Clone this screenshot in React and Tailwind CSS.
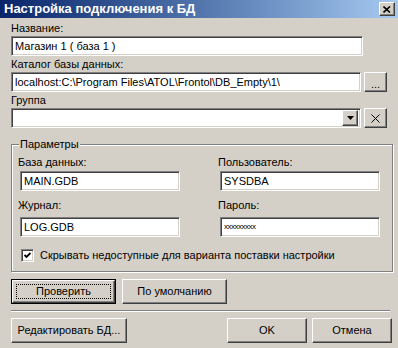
import { useState } from 'react';

const sunken =
  'bg-white border border-t-[#808080] border-l-[#808080] border-b-white border-r-white shadow-[inset_1px_1px_0_#404040,inset_-1px_-1px_0_#d4d0c8]';
const raised =
  'bg-[#d4d0c8] border border-t-white border-l-white border-b-[#404040] border-r-[#404040] shadow-[inset_-1px_-1px_0_#808080]';

function Field({ value, className = '' }) {
  return (
    <div className={`${sunken} h-[20px] flex items-center pl-[3px] text-black whitespace-nowrap overflow-hidden ${className}`}>
      {value}
    </div>
  );
}

function Button({ children, className = '', isDefault = false }) {
  if (isDefault) {
    return (
      <div className={`border border-black h-[25px] ${className}`}>
        <div className={`${raised} h-full flex items-center justify-center p-[3px]`}>
          <div className="w-full h-full border border-dotted border-black flex items-center justify-center">
            {children}
          </div>
        </div>
      </div>
    );
  }
  return (
    <div className={`${raised} h-[25px] flex items-center justify-center ${className}`}>
      {children}
    </div>
  );
}

export default function App() {
  const [hideUnavailable, setHideUnavailable] = useState(true);

  return (
    <div className="w-[398px] h-[348px] bg-[#d4d0c8] text-[11px] leading-[13px] text-black font-['Liberation_Sans',Arial,sans-serif] overflow-hidden">
      {/* Заголовок окна */}
      <div className="h-[18px] flex items-center pl-[4px] pr-[3px] bg-gradient-to-r from-[#0a246a] to-[#a6caf0]">
        <span className="text-white font-bold text-[13px] leading-[14px]">Настройка подключения к БД</span>
        <div className={`${raised} ml-auto w-[16px] h-[14px] flex items-center justify-center`}>
          <svg width="8" height="7" viewBox="0 0 8 7">
            <path d="M0.5 0.5 L7 6.5 M7 0.5 L0.5 6.5" stroke="black" strokeWidth="1.6" />
          </svg>
        </div>
      </div>

      <div className="px-[11px]">
        <div className="mt-[4px]">Название:</div>
        <Field value="Магазин 1 ( база 1 )" className="w-[352px] mt-[1px]" />

        <div className="mt-[2px]">Каталог базы данных:</div>
        <div className="flex gap-[3px] mt-[1px]">
          <Field value="localhost:C:\Program Files\ATOL\Frontol\DB_Empty\1\" className="w-[352px]" />
          <div className={`${raised} w-[23px] h-[20px] flex items-end justify-center pb-[3px]`}>
            <span className="leading-[8px]">...</span>
          </div>
        </div>

        <div className="mt-[2px]">Группа</div>
        <div className="flex gap-[3px] mt-[1px]">
          <div className={`${sunken} w-[352px] h-[20px] flex justify-end items-center pr-[2px]`}>
            <div className={`${raised} w-[16px] h-[16px] flex items-center justify-center`}>
              <svg width="7" height="4" viewBox="0 0 7 4">
                <path d="M0 0 H7 L3.5 4 Z" fill="black" />
              </svg>
            </div>
          </div>
          <div className={`${raised} w-[23px] h-[20px] flex items-center justify-center`}>
            <svg width="9" height="9" viewBox="0 0 9 9">
              <path d="M0.5 0.5 L8.5 8.5 M8.5 0.5 L0.5 8.5" stroke="black" strokeWidth="1" />
            </svg>
          </div>
        </div>

        {/* Параметры */}
        <fieldset className="mt-[10px] w-[380px] h-[134px] border border-[#808080] shadow-[1px_1px_0_white,inset_1px_1px_0_white] px-[5px]">
          <legend className="px-[1px] ml-[2px] bg-[#d4d0c8]">Параметры</legend>
          <div className="flex mt-[5px]">
            <div className="w-[200px]">
              <div className="pl-[1px]">База данных:</div>
              <Field value="MAIN.GDB" className="w-[160px] ml-[3px] mt-[2px]" />
              <div className="pl-[1px] mt-[8px]">Журнал:</div>
              <Field value="LOG.GDB" className="w-[160px] ml-[3px] mt-[5px]" />
            </div>
            <div className="w-[170px]">
              <div className="pl-[1px]">Пользователь:</div>
              <Field value="SYSDBA" className="w-[160px] ml-[3px] mt-[2px]" />
              <div className="pl-[1px] mt-[8px]">Пароль:</div>
              <Field value={<span className="text-[8px] leading-[8px] tracking-[-0.5px]">xxxxxxxxx</span>} className="w-[160px] ml-[3px] mt-[5px]" />
            </div>
          </div>
          <label className="flex items-center gap-[6px] mt-[12px] ml-[4px]" onClick={() => setHideUnavailable(!hideUnavailable)}>
            <span className={`${sunken} w-[13px] h-[13px] flex items-center justify-center`}>
              {hideUnavailable && (
                <svg width="7" height="7" viewBox="0 0 7 7">
                  <path d="M0.5 3 L2.5 5 L6.5 1" stroke="black" strokeWidth="1.8" fill="none" />
                </svg>
              )}
            </span>
            <span>Скрывать недоступные для варианта поставки настройки</span>
          </label>
        </fieldset>

        <div className="flex gap-[6px] mt-[7px]">
          <Button isDefault className="w-[105px]">Проверить</Button>
          <Button className="w-[105px]">По умолчанию</Button>
        </div>

        <div className="mt-[6px] w-[379px] h-[2px] border-t border-t-[#808080] border-b border-b-white" />

        <div className="flex mt-[6px]">
          <Button className="w-[116px]">Редактировать БД...</Button>
          <Button className="w-[80px] ml-auto">OK</Button>
          <Button className="w-[80px] ml-[5px] mr-[-5px]">Отмена</Button>
        </div>
      </div>
    </div>
  );
}
